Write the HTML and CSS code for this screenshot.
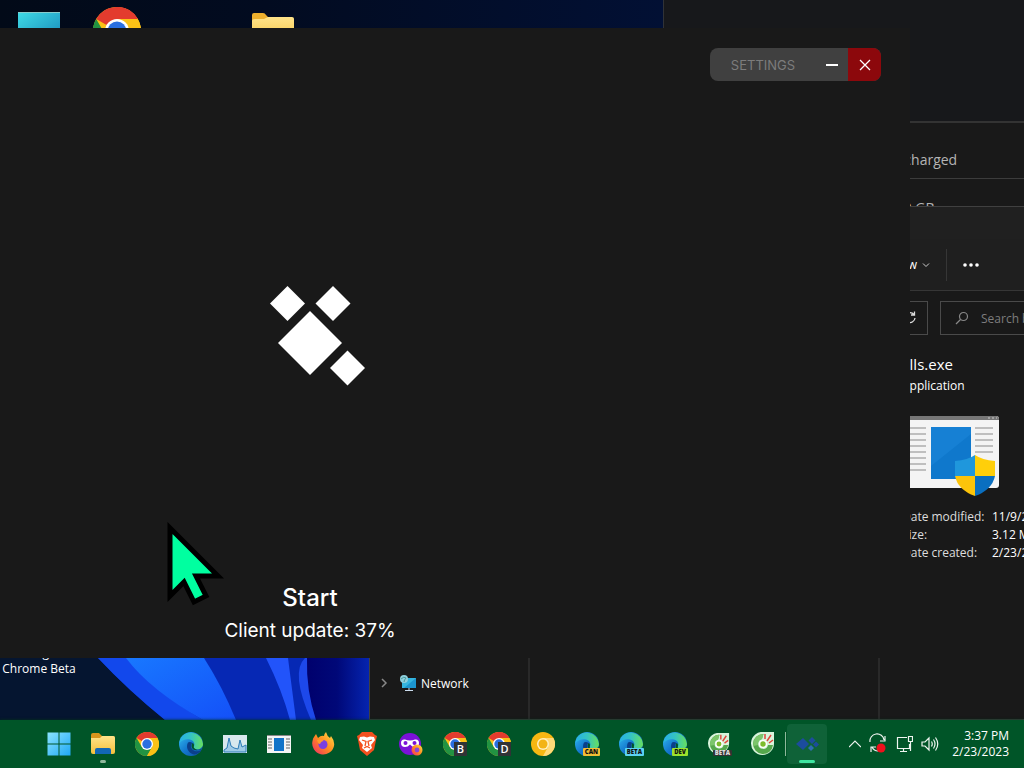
FILE: index.html
```html
<!DOCTYPE html>
<html lang="en">
<head>
    <meta charset="UTF-8">
    <meta name="viewport" content="width=device-width, initial-scale=1.0">
    <title>Desktop</title>
    <link rel="stylesheet" href="styles.css">
</head>
<body>
    <!-- shared icon shapes -->
    <svg class="defs" aria-hidden="true">
        <defs>
            <linearGradient id="edge-blue" x1="0" y1="0" x2="1" y2="1">
                <stop offset="0" stop-color="#35c1f1"/><stop offset="0.5" stop-color="#1478cf"/><stop offset="1" stop-color="#0c4f9e"/>
            </linearGradient>
            <linearGradient id="edge-green" x1="0" y1="0" x2="1" y2="0">
                <stop offset="0" stop-color="#27b2e8"/><stop offset="0.5" stop-color="#35c4c0"/><stop offset="1" stop-color="#66e05e"/>
            </linearGradient>
            <linearGradient id="win" x1="0" y1="0" x2="1" y2="1">
                <stop offset="0" stop-color="#8be3ff"/><stop offset="1" stop-color="#1fa8f5"/>
            </linearGradient>
            <linearGradient id="folder" x1="0" y1="0" x2="0" y2="1">
                <stop offset="0" stop-color="#ffe38a"/><stop offset="1" stop-color="#f5c03a"/>
            </linearGradient>
            <linearGradient id="fox" x1="1" y1="0" x2="0" y2="1">
                <stop offset="0" stop-color="#ffe34a"/><stop offset="0.5" stop-color="#ff8b1f"/><stop offset="1" stop-color="#f0246b"/>
            </linearGradient>
        </defs>
        <symbol id="chrome" viewBox="0 0 24 24">
            <circle cx="12" cy="12" r="12" fill="#fbc116"/>
            <path d="M12 12 L1.6 6 A12 12 0 0 1 22.4 6 Z" fill="#e33b2e"/>
            <path d="M12 6 H22.4 A12 12 0 0 0 12 0 Z" fill="#e33b2e"/>
            <path d="M1.6 6 A12 12 0 0 0 12 24 L17.2 15 L6.8 15 Z" fill="#229342"/>
            <path d="M12 6 H22.4 A12 12 0 0 1 12 24 L17.2 15 Z" fill="#fbc116"/>
            <circle cx="12" cy="12" r="6" fill="#fff"/>
            <circle cx="12" cy="12" r="4.7" fill="#2a6fe0"/>
        </symbol>
        <symbol id="edge" viewBox="0 0 24 24">
            <circle cx="12" cy="12" r="12" fill="url(#edge-blue)"/>
            <path d="M1 8 A12 12 0 0 1 24 12 C24 16 20 18 16.500 17 C14 16.400 14.200 15 15 14 C16 12 15 8.500 11 7.500 C7 6.500 3 8 0.500 11 Z" fill="url(#edge-green)"/>
            <path d="M9 10.500 C6.500 15 9 21 15 22.500 C18 22.500 20.500 21 22.300 18.300 C19 20 15 19.500 13 17 C11.500 15 11.500 12.500 13.500 11 C12 9.700 10 9.600 9 10.500 Z" fill="#0b3f8a"/>
            <path d="M13.500 11 C12 13 12.200 15.500 14 17.300 C16.500 18.700 20 18.500 22.800 16.500 L21.500 17.800 C18 18.400 14 16.500 14.900 14.200 C15.300 13 14.800 11.600 13.500 11 Z" fill="#005528"/>
        </symbol>
        <symbol id="coc" viewBox="0 0 24 24">
            <path d="M13 0 H23 V11 A11.500 11.500 0 1 1 13 0 Z" fill="#d9f5dc"/>
            <path d="M12.500 2 A10 10 0 1 0 22 13 L17 13 A5 5 0 1 1 11 7 Z" fill="#55a84c"/>
            <path d="M12.500 2 A10 10 0 0 0 2.500 14 L7 13 A5 5 0 0 1 11 7 Z" fill="#7cc66b"/>
            <path d="M14 7 V2 M16 9 L20 3 M18 11 L22 8" stroke="#e0463c" stroke-width="1.500"/>
            <circle cx="12" cy="12" r="4" fill="#fff"/>
            <circle cx="12" cy="12" r="2.700" fill="#7dbb2c"/>
        </symbol>
    </svg>

    <div class="desktop">
        <svg class="wallpaper" viewBox="0 0 664 720" preserveAspectRatio="none" aria-hidden="true">
            <defs>
                <linearGradient id="sky" x1="0" y1="0" x2="1" y2="0">
                    <stop offset="0" stop-color="#020a18"/><stop offset="0.400" stop-color="#020b20"/><stop offset="1" stop-color="#021034"/>
                </linearGradient>
                <linearGradient id="petal" x1="0" y1="0" x2="1" y2="1">
                    <stop offset="0" stop-color="#1878ff"/><stop offset="1" stop-color="#1450f8"/>
                </linearGradient>
                <linearGradient id="deep" x1="0" y1="0" x2="1" y2="0">
                    <stop offset="0" stop-color="#00006c"/><stop offset="0.500" stop-color="#000878"/><stop offset="1" stop-color="#0524b0"/>
                </linearGradient>
            </defs>
            <rect width="664" height="720" fill="url(#sky)"/>
            <rect y="640" width="200" height="80" fill="#051530"/>
            <path d="M98 658 H369 V720 H165 Q128 690 98 658 Z" fill="#0628b4"/>
            <path d="M98 658 H128 Q160 695 203 720 H165 Q128 690 98 658 Z" fill="#1248ec"/>
            <path d="M126 658 H204 Q222 686 236 720 H203 Q150 690 126 658 Z" fill="url(#petal)"/>
            <path d="M266 658 H288 L296 720 H290 Q282 690 266 658 Z" fill="#2254fa"/>
            <path d="M305 658 H369 V720 H315 Q306 690 305 658 Z" fill="url(#deep)"/>
            <path d="M305 658 Q290 672 311 720 H316 Q306 690 307 658 Z" fill="#1d48ea"/>
        </svg>

        <svg class="shortcut shortcut-pc" viewBox="0 0 42 30" aria-hidden="true">
            <defs>
                <linearGradient id="pc" x1="0" y1="0" x2="1" y2="1">
                    <stop offset="0" stop-color="#3fdbe6"/><stop offset="1" stop-color="#1788b8"/>
                </linearGradient>
            </defs>
            <rect width="42" height="30" fill="url(#pc)"/>
            <rect width="42" height="1" fill="#8cc"/>
        </svg>
        <svg class="shortcut shortcut-chrome" aria-hidden="true"><use href="#chrome"/></svg>
        <svg class="shortcut shortcut-folder" viewBox="0 0 42 34" aria-hidden="true">
            <path d="M0 2 Q0 0 2 0 H11 Q13 0 14 2 L17 5 H40 Q42 5 42 7 V34 H0 Z" fill="#eeb02d"/>
            <path d="M0 8 Q0 6 3 6 H12 L16 4 H40 Q42 4 42 6 V34 H0 Z" fill="url(#folder)"/>
        </svg>
        <div class="shortcut-label">Google<br>Chrome Beta</div>

        <section class="window system">
            <div class="system-head"></div>
            <div class="system-row first">Discharged</div>
            <div class="system-row">32.0 GB</div>
        </section>

        <section class="window explorer">
            <div class="explorer-title"></div>
            <div class="toolbar">
                <button class="view">View
                    <svg width="8" height="8" viewBox="0 0 8 8" fill="none" stroke="#ccc"><path d="M1 2.500 L4 5.500 L7 2.500"/></svg>
                </button>
                <button class="more" aria-label="See more">
                    <svg width="18" height="4" viewBox="0 0 18 4" fill="#fff"><circle cx="3" cy="2" r="1.800"/><circle cx="9" cy="2" r="1.800"/><circle cx="15" cy="2" r="1.800"/></svg>
                </button>
            </div>
            <div class="address-row">
                <div class="address">
                    <button aria-label="Refresh">
                        <svg width="14" height="14" viewBox="0 0 14 14" fill="none" stroke="#ddd" stroke-width="1.300"><path d="M11 3.500 A5 5 0 1 0 12 7 M11.500 0.500 V4 H8"/></svg>
                    </button>
                </div>
                <label class="search">
                    <svg width="14" height="14" viewBox="0 0 14 14" fill="none" stroke="#888" stroke-width="1.200"><circle cx="8.500" cy="5.500" r="4"/><path d="M5.500 8.500 L1 13"/></svg>
                    <input type="text" placeholder="Search bin" aria-label="Search">
                </label>
            </div>
            <div class="panes">
                <nav class="nav-pane">
                    <a href="#" class="nav-item">
                        <svg width="8" height="10" viewBox="0 0 8 10" fill="none" stroke="#888" stroke-width="1.500"><path d="M2 1 L6 5 L2 9"/></svg>
                        <svg width="16" height="16" viewBox="0 0 16 16">
                            <rect x="2" y="3" width="14" height="10" fill="#1c96cf"/>
                            <path d="M2 3 H16 L4 13 H2 Z" fill="#35b6df"/>
                            <path d="M9 13 V15 M5 15.500 H13" stroke="#cde"/>
                            <circle cx="4" cy="4" r="4" fill="#8fd0dd"/>
                            <path d="M1 4 Q4 1 6 3 Q4 5 4 7" fill="none" stroke="#4a9a9c"/>
                        </svg>
                        Network
                    </a>
                </nav>
                <div class="file-pane"></div>
                <aside class="details">
                    <h2>illls.exe</h2>
                    <p>Application</p>
                    <svg class="app-icon" viewBox="0 0 97 80" aria-hidden="true">
                        <rect width="97" height="72" rx="3" fill="#f4f4f4"/>
                        <path d="M0 4 V3 Q0 0 3 0 H94 Q97 0 97 3 V4 Z" fill="#777"/>
                        <path d="M86 2 H88 M90 2 H92 M94 2 H95" stroke="#ccc"/>
                        <path d="M4 12 H24 M4 18 H24 M4 24 H24 M4 30 H24 M4 36 H24 M4 42 H24 M4 48 H24 M4 54 H24 M73 12 H91 M73 18 H91 M73 24 H91 M73 30 H91 M73 36 H91" stroke="#8a8a8a"/>
                        <path d="M29 11 H69 V63 H29 Z" fill="#0f78cc"/>
                        <path d="M29 11 H69 V18 L29 50 Z" fill="#1680d4"/>
                        <path d="M73 39 Q80 44 93 45 V60 H73 Z" fill="#ffcf0a"/>
                        <path d="M73 39 Q66 44 53 45 V60 H73 Z" fill="#1f97dc"/>
                        <path d="M53 60 H73 V80 Q56 74 53 60 Z" fill="#fcc40a"/>
                        <path d="M93 60 H73 V80 Q90 74 93 60 Z" fill="#0a6fc0"/>
                    </svg>
                    <dl>
                        <dt>Date modified:</dt><dd>11/9/2022</dd>
                        <dt>Size:</dt><dd>3.12 MB</dd>
                        <dt>Date created:</dt><dd>2/23/2023</dd>
                    </dl>
                </aside>
            </div>
        </section>

        <main class="window launcher">
            <div class="controls">
                <button class="settings">SETTINGS</button>
                <button class="minimize" aria-label="Minimize">
                    <svg width="12" height="12" viewBox="0 0 12 12" stroke="#fff" stroke-width="2"><path d="M0 6 H12"/></svg>
                </button>
                <button class="close" aria-label="Close">
                    <svg width="12" height="12" viewBox="0 0 12 12" stroke="#fff" stroke-width="1.300"><path d="M1 1 L11 11 M11 1 L1 11"/></svg>
                </button>
            </div>
            <div class="logo">
                <svg width="110" height="100" viewBox="0 0 110 100" fill="#fff" aria-hidden="true">
                    <path d="M32.500 0 L50 17.500 L32.500 35 L15 17.500 Z"/>
                    <path d="M78 0 L95.500 17.500 L78 35 L60.500 17.500 Z"/>
                    <path d="M55 25 L87 57 L55 89 L23 57 Z"/>
                    <path d="M92.500 64.500 L110 82 L92.500 99.500 L75 82 Z"/>
                </svg>
            </div>
            <div class="status">
                <h1>Start</h1>
                <p>Client update: 37%</p>
            </div>
        </main>

        <svg class="cursor" viewBox="0 0 62 84" aria-hidden="true">
            <path d="M3 6 L51 54 H29 L39 74 L27 80 L17 60 L3 74 Z" fill="#00ffa0" stroke="#000" stroke-width="5"/>
        </svg>
    </div>

    <footer class="taskbar">
        <div class="apps">
            <button aria-label="Start menu">
                <svg viewBox="0 0 24 24" fill="url(#win)"><path d="M0.500 0.500 H11.500 V11.500 H0.500 Z M12.500 0.500 H23.500 V11.500 H12.500 Z M0.500 12.500 H11.500 V23.500 H0.500 Z M12.500 12.500 H23.500 V23.500 H12.500 Z"/></svg>
            </button>
            <button class="running" aria-label="File Explorer">
                <svg viewBox="0 0 24 24"><path d="M0 3 Q0 1 2 1 H8 L11 4 H22 Q24 4 24 6 V12 H0 Z" fill="#d9951c"/><path d="M0 6 H9 L11 4 H22 Q24 4 24 6 V20 Q24 22 22 22 H2 Q0 22 0 20 Z" fill="url(#folder)"/><path d="M4 22 V18 Q4 16 6 16 H18 Q20 16 20 18 V22 Z" fill="#1267b5"/></svg>
            </button>
            <button aria-label="Chrome"><svg><use href="#chrome"/></svg></button>
            <button aria-label="Edge"><svg><use href="#edge"/></svg></button>
            <button aria-label="Performance Monitor">
                <svg viewBox="0 0 24 24"><rect y="3" width="24" height="18" fill="#d8e9ee"/><path d="M1 18 L4 16 L6 6 L8 14 L11 16 L15 17 L17 8 L19 15 L23 13 V20 H1 Z" fill="#9fcbe6" stroke="#2d7db8"/></svg>
            </button>
            <button aria-label="Application">
                <svg viewBox="0 0 24 24"><rect y="3" width="24" height="18" fill="#f4f4f4"/><path d="M0 3.500 H24" stroke="#888"/><path d="M1 7 H5 M1 10 H5 M1 13 H5 M1 16 H5 M19 7 H23 M19 10 H23 M19 13 H23 M19 16 H23" stroke="#666"/><path d="M7 6 H17 V19 H7 Z" fill="#1173c8"/></svg>
            </button>
            <button aria-label="Firefox">
                <svg viewBox="0 0 24 24"><path d="M3 5 L5 2 L7 6 Q10 3 13 4 Q13 2 15 0 Q16 4 19 6 L20 4 Q24 9 23 14 A11 11 0 1 1 1.500 9 Q2 6 3 5 Z" fill="url(#fox)"/><circle cx="12" cy="12.500" r="4.500" fill="#7a3fe0"/><path d="M6 8 Q10 6 13 9 Q10 9 9 12 Q7 12 6 8 Z" fill="#ff9a2b"/></svg>
            </button>
            <button aria-label="Brave">
                <svg viewBox="0 0 24 24"><path d="M7 0 H17 L20 3 L22 4 L21 8 L19 18 L12 24 L5 18 L3 8 L2 4 L4 3 Z" fill="#f4501e"/><path d="M5 5 L9 4.500 L12 5.500 L15 4.500 L19 5 L20 8 L16 13 L17 16 L12 20 L7 16 L8 13 L4 8 Z" fill="#fff"/><path d="M7 8 L11 9.500 L10 14 M17 8 L13 9.500 L14 14 M9 16 L12 14.500 L15 16" fill="none" stroke="#f4501e" stroke-width="1.300"/></svg>
            </button>
            <button aria-label="Private browsing">
                <svg viewBox="0 0 24 24"><circle cx="11" cy="12" r="11" fill="#7a12d8"/><path d="M2 11 Q2 7 6 7.500 Q11 9.500 16 7.500 Q20 7 20 11 Q20 15 16 15 Q13 15 11 12.500 Q9 15 6 15 Q2 15 2 11 Z" fill="#fff"/><circle cx="6.500" cy="11" r="2" fill="#7a12d8"/><circle cx="15.500" cy="11" r="2" fill="#7a12d8"/><circle cx="18" cy="18" r="5.500" fill="url(#fox)"/><circle cx="18" cy="18" r="2.400" fill="#8a48d8"/></svg>
            </button>
            <button aria-label="Chrome Beta"><svg><use href="#chrome"/></svg><span class="letter">B</span></button>
            <button aria-label="Chrome Dev"><svg><use href="#chrome"/></svg><span class="letter">D</span></button>
            <button aria-label="Chrome Canary">
                <svg viewBox="0 0 24 24"><circle cx="12" cy="12" r="12" fill="#f6b712"/><path d="M12 6 H22.400 A12 12 0 0 1 12 24 L17 15 Z" fill="#ffd978"/><circle cx="12" cy="12" r="6" fill="#fff0c0"/><circle cx="12" cy="12" r="4.500" fill="#f3b416"/></svg>
            </button>
            <button aria-label="Edge Canary"><svg><use href="#edge"/></svg><span class="tag can">CAN</span></button>
            <button aria-label="Edge Beta"><svg><use href="#edge"/></svg><span class="tag beta">BETA</span></button>
            <button aria-label="Edge Dev"><svg><use href="#edge"/></svg><span class="tag dev">DEV</span></button>
            <button class="small" aria-label="Coc Coc Beta"><svg><use href="#coc"/></svg><span class="tag dark">BETA</span></button>
            <button class="divided" aria-label="Coc Coc"><svg><use href="#coc"/></svg></button>
            <button class="active" aria-label="Launcher">
                <svg viewBox="0 0 24 24" fill="#1c4c9c"><path d="M8 6 L14 12 L8 18 L1 12 Z"/><path d="M17 5 L20.500 8.500 L17 12 L13.500 8.500 Z"/><path d="M21 9.500 L24 12.500 L21 15.500 L18 12.500 Z"/><path d="M16 13 L19 16 L16 19 L13 16 Z" fill="#2f6cb4"/></svg>
            </button>
        </div>
        <div class="tray">
            <svg width="12" height="24" viewBox="0 0 12 24"><path d="M0 15 L6 9 L12 15"/></svg>
            <svg width="18" height="24" viewBox="0 0 18 24"><path d="M1 10 A7 7 0 0 1 15 8 M16 4 V9 H11 M2 20 V15 H7 M3 15 Q5 19 9 19"/><circle cx="12" cy="16" r="4.500" class="alert"/></svg>
            <svg width="18" height="24" viewBox="0 0 18 24"><path d="M12 5.500 H2.500 V16.500 H14.500 V12 M8.500 17 V19.500 M5 19.500 H12 M13.500 4.500 H17.500 V9.500 H13.500 Z M15.500 9.500 V19"/></svg>
            <svg width="18" height="24" viewBox="0 0 18 24"><path d="M1 10 H4 L8 6 V18 L4 14 H1 Z M10.500 9.500 Q12 12 10.500 14.500 M12.500 7.500 Q15.500 12 12.500 16.500 M14.500 5.500 Q19 12 14.500 18.500"/></svg>
            <time class="clock" datetime="2023-02-23T15:37">3:37 PM<br>2/23/2023</time>
        </div>
    </footer>
</body>
</html>
```
FILE: styles.css
```css
* {
    box-sizing: border-box;
}
body {
    display: flex;
    flex-direction: column;
    height: 100vh;
    margin: 0;
    overflow: hidden;
    background-color: #020a18;
    color: #fff;
    font-family: "Open Sans", "Noto Sans", sans-serif;
    font-size: 12px;
}
h1, h2, p, dl, dd {
    margin: 0;
}
button {
    display: flex;
    align-items: center;
    justify-content: center;
    padding: 0;
    border: none;
    background: none;
    color: inherit;
    font: inherit;
    cursor: pointer;
}
.defs {
    position: absolute;
    width: 0;
    height: 0;
}

/* desktop */
.desktop {
    position: relative;
    flex: 1;
    overflow: hidden;
}
.wallpaper {
    position: absolute;
    width: 664px;
    height: 720px;
}
.shortcut {
    position: absolute;
}
.shortcut-pc {
    left: 18px;
    top: 12px;
    width: 42px;
    height: 30px;
}
.shortcut-chrome {
    left: 93px;
    top: 7px;
    width: 48px;
    height: 48px;
}
.shortcut-folder {
    left: 252px;
    top: 13px;
    width: 42px;
    height: 34px;
}
.shortcut-label {
    position: absolute;
    left: 0;
    top: 645px;
    width: 78px;
    line-height: 16px;
    text-align: center;
    white-space: nowrap;
}
.window {
    position: absolute;
    background-color: #191919;
}

/* system window */
.system {
    left: 663px;
    right: 0;
    top: 0;
    height: 300px;
    border-left: 1px solid #303236;
}
.system-head {
    height: 123px;
    background-color: #17181b;
    border-bottom: 2px solid #333;
}
.system-row {
    height: 56px;
    padding-left: 220px;
    border-bottom: 1px solid #3c3c3c;
    color: #b4b4b4;
    font-size: 14px;
    line-height: 58px;
}
.system-row.first {
    padding-top: 8px;
}

/* explorer */
.explorer {
    left: 369px;
    top: 206px;
    bottom: 0;
    width: 820px;
    display: flex;
    flex-direction: column;
    border: 1px solid #404040;
}
.explorer-title {
    height: 32px;
    background-color: #202020;
}
.toolbar {
    display: flex;
    align-items: center;
    height: 52px;
    background-color: #1f1f1f;
    border-bottom: 1px solid #363636;
}
.view {
    width: 577px;
    height: 32px;
    padding-right: 16px;
    justify-content: flex-end;
    gap: 5px;
    border-right: 1px solid #363636;
}
.more {
    width: 48px;
    height: 32px;
}
.address-row {
    display: flex;
    gap: 12px;
    padding: 10px 0 10px 10px;
}
.address {
    display: flex;
    justify-content: flex-end;
    width: 548px;
    height: 34px;
    padding-right: 10px;
    border: 1px solid #4a4a4a;
}
.search {
    display: flex;
    flex: 1;
    align-items: center;
    gap: 12px;
    padding-left: 14px;
    border: 1px solid #4a4a4a;
}
.search input {
    width: 140px;
    padding: 0;
    border: none;
    background: none;
    color: #fff;
    font: inherit;
}
.search input::placeholder {
    color: #7d7d7d;
}
.panes {
    display: grid;
    grid-template-columns: 160px 350px 1fr;
    flex: 1;
}
.nav-pane {
    display: flex;
    flex-direction: column;
    justify-content: flex-end;
    padding: 0 0 24px 10px;
    border-right: 2px solid #292929;
}
.nav-item {
    display: flex;
    align-items: center;
    gap: 5px;
    height: 24px;
    color: #fff;
    text-decoration: none;
}
.nav-item svg:first-child {
    margin-right: 7px;
}
.file-pane {
    border-right: 2px solid #292929;
}
.details {
    padding: 8px 0 0 22px;
}
.details h2 {
    font-size: 15px;
    font-weight: 400;
    line-height: 22px;
}
.details p {
    line-height: 22px;
}
.app-icon {
    display: block;
    width: 97px;
    height: 80px;
    margin: 19px 0 12px;
}
.details dl {
    display: grid;
    grid-template-columns: 90px 1fr;
    line-height: 18px;
    white-space: nowrap;
}
.details dt {
    color: #ddd;
}

/* launcher */
.launcher {
    left: -290px;
    top: 28px;
    width: 1200px;
    height: 630px;
    display: flex;
    flex-direction: column;
    align-items: center;
    font-family: Inter, sans-serif;
}
.controls {
    display: flex;
    align-self: flex-end;
    height: 33px;
    margin: 20px 29px 0 0;
    border-radius: 8px;
    background-color: #404040;
    overflow: hidden;
}
.settings {
    width: 106px;
    color: #7c7c7c;
    font-size: 13px;
}
.minimize {
    width: 32px;
}
.close {
    width: 33px;
    background-color: #8c080c;
}
.logo {
    display: flex;
    flex: 1;
    align-items: center;
    padding-top: 8px;
}
.status {
    padding-bottom: 15px;
    text-align: center;
}
.status h1 {
    font-size: 24px;
    font-weight: 500;
    line-height: 32px;
}
.status p {
    font-size: 19px;
    line-height: 24px;
    margin-top: 5px;
}
.cursor {
    position: absolute;
    left: 167px;
    top: 522px;
    width: 62px;
    height: 84px;
}

/* taskbar */
.taskbar {
    position: relative;
    display: flex;
    justify-content: space-between;
    height: 48px;
    padding: 0 15px 0 39px;
    background-color: #005528;
    box-shadow: 0 0 3px #003318;
}
.apps {
    display: flex;
    align-items: center;
    gap: 4px;
}
.apps button {
    position: relative;
    width: 40px;
    height: 40px;
    border-radius: 4px;
}
.apps svg {
    width: 24px;
    height: 24px;
}
.apps .small svg {
    width: 22px;
    height: 22px;
}
.running::after, .active::after {
    content: "";
    position: absolute;
    bottom: 1px;
    width: 6px;
    height: 3px;
    border-radius: 2px;
    background-color: #8fb89c;
}
.apps .active {
    background-color: #0f6238;
}
.active::after {
    width: 16px;
    background-color: #3ee6a0;
}
.divided::after {
    content: "";
    position: absolute;
    right: -3px;
    top: 8px;
    width: 1px;
    height: 24px;
    background-color: #8fb89c;
}
.letter {
    position: absolute;
    right: 8px;
    bottom: 8px;
    width: 13px;
    height: 14px;
    background-color: #2f3336;
    font-size: 11px;
    font-weight: 600;
    line-height: 14px;
}
.tag {
    position: absolute;
    right: 7px;
    bottom: 8px;
    padding: 0 2px;
    border-radius: 1px;
    color: #111;
    font-size: 6px;
    font-weight: 800;
    line-height: 8px;
}
.can {
    background-color: #f2bd35;
}
.beta {
    background-color: #5cd3f2;
}
.dev {
    background-color: #9be22c;
}
.dark {
    background-color: #333;
    color: #ddd;
    line-height: 6px;
}
.tray {
    display: flex;
    align-items: center;
    gap: 8px;
}
.tray svg {
    fill: none;
    stroke: #eef5f0;
    stroke-width: 1.2;
}
.tray .alert {
    fill: #f0101c;
    stroke: none;
}
.clock {
    margin-left: 5px;
    line-height: 16px;
    text-align: right;
}
```
